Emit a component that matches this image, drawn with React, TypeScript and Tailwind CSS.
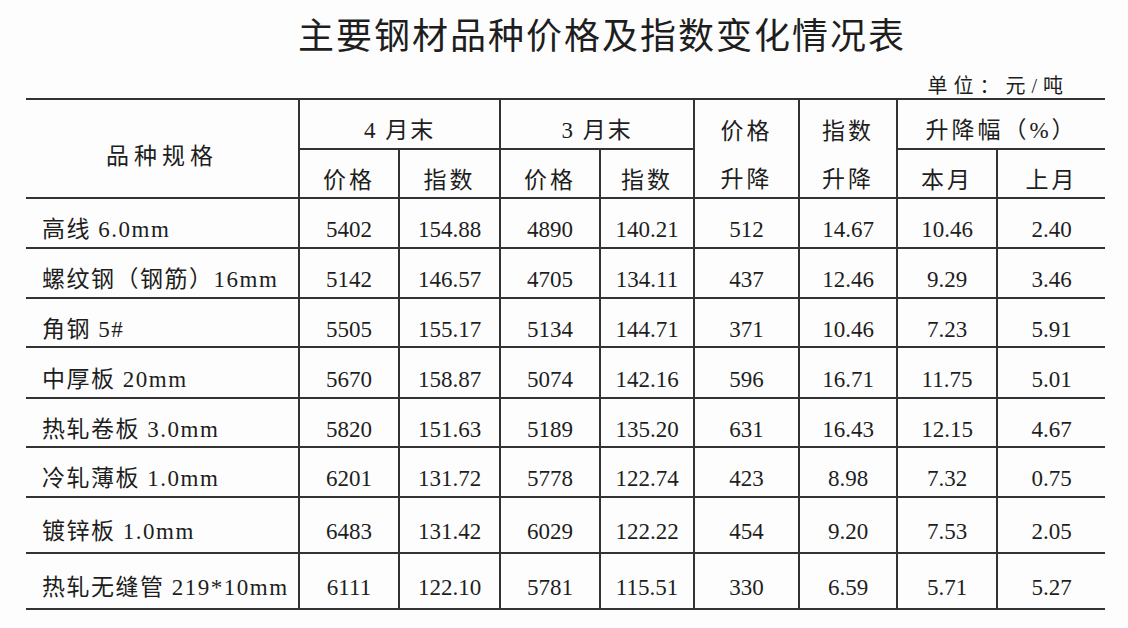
const rows = [
  { h: "h-[50px]", cells: ["高线 6.0mm", "5402", "154.88", "4890", "140.21", "512", "14.67", "10.46", "2.40"] },
  { h: "h-[50px]", cells: ["螺纹钢（钢筋）16mm", "5142", "146.57", "4705", "134.11", "437", "12.46", "9.29", "3.46"] },
  { h: "h-[49px]", cells: ["角钢 5#", "5505", "155.17", "5134", "144.71", "371", "10.46", "7.23", "5.91"] },
  { h: "h-[51px]", cells: ["中厚板 20mm", "5670", "158.87", "5074", "142.16", "596", "16.71", "11.75", "5.01"] },
  { h: "h-[49px]", cells: ["热轧卷板 3.0mm", "5820", "151.63", "5189", "135.20", "631", "16.43", "12.15", "4.67"] },
  { h: "h-[50px]", cells: ["冷轧薄板 1.0mm", "6201", "131.72", "5778", "122.74", "423", "8.98", "7.32", "0.75"] },
  { h: "h-[56px]", cells: ["镀锌板 1.0mm", "6483", "131.42", "6029", "122.22", "454", "9.20", "7.53", "2.05"] },
  { h: "h-[56px]", cells: ["热轧无缝管 219*10mm", "6111", "122.10", "5781", "115.51", "330", "6.59", "5.71", "5.27"] },
];

const line = "border-2 border-[#333] leading-[26px]";

export default function App() {
  return (
    <div className="h-[628px] w-[1128px] overflow-hidden bg-[#fdfdfd] font-['Liberation_Serif','Noto_Sans_CJK_SC',serif] text-[#1e1e1e]">
      <div className="flex h-[74px] items-center justify-center pl-[76px]">
        <h1 className="text-[36px] leading-none tracking-[2px]">主要钢材品种价格及指数变化情况表</h1>
      </div>
      <div className="flex h-[24px] items-center justify-end pr-[59px] text-[20px] leading-[24px] tracking-[6px]">
        单位：元/吨
      </div>
      <div className="ml-[26px] w-[1079px]">
        <table className="w-full table-fixed border-collapse">
          <colgroup>
            <col className="w-[273px]" />
            <col className="w-[100px]" />
            <col className="w-[101px]" />
            <col className="w-[100px]" />
            <col className="w-[94px]" />
            <col className="w-[105px]" />
            <col className="w-[98px]" />
            <col className="w-[100px]" />
            <col className="w-[108px]" />
          </colgroup>
          <thead className="text-[23px] font-normal">
            <tr className="h-[50px]">
              <th rowSpan={2} className={`${line} border-l-0 pt-[16px] align-middle font-normal tracking-[5px]`}>
                品种规格
              </th>
              <th colSpan={2} className={`${line} pt-[14px] align-middle font-normal tracking-[2px]`}>
                4 月末
              </th>
              <th colSpan={2} className={`${line} pt-[14px] align-middle font-normal tracking-[2px]`}>
                3 月末
              </th>
              <th className={`${line} border-b-0 pt-[14px] align-middle font-normal tracking-[3px]`}>价格</th>
              <th className={`${line} border-b-0 pt-[14px] align-middle font-normal tracking-[3px]`}>指数</th>
              <th colSpan={2} className={`${line} border-r-0 pt-[14px] align-middle font-normal tracking-[3px]`}>
                升降幅（%）
              </th>
            </tr>
            <tr className="h-[49px]">
              <th className={`${line} pt-[14px] align-middle font-normal tracking-[3px]`}>价格</th>
              <th className={`${line} pt-[14px] align-middle font-normal tracking-[3px]`}>指数</th>
              <th className={`${line} pt-[14px] align-middle font-normal tracking-[3px]`}>价格</th>
              <th className={`${line} pt-[14px] align-middle font-normal tracking-[3px]`}>指数</th>
              <th className={`${line} border-t-0 pt-[14px] align-middle font-normal tracking-[3px]`}>升降</th>
              <th className={`${line} border-t-0 pt-[14px] align-middle font-normal tracking-[3px]`}>升降</th>
              <th className={`${line} pt-[14px] align-middle font-normal tracking-[3px]`}>本月</th>
              <th className={`${line} border-r-0 pt-[14px] align-middle font-normal tracking-[3px]`}>上月</th>
            </tr>
          </thead>
          <tbody className="text-[23px]">
            {rows.map((row) => (
              <tr key={row.cells[0]} className={row.h}>
                {row.cells.map((cell, i) => (
                  <td
                    key={i}
                    className={
                      i === 0
                        ? `${line} border-l-0 pl-[16px] pt-[14px] text-left align-middle tracking-[1.5px] whitespace-nowrap`
                        : i === 8
                          ? `${line} border-r-0 pt-[14px] text-center align-middle`
                          : `${line} pt-[14px] text-center align-middle`
                    }
                  >
                    {cell}
                  </td>
                ))}
              </tr>
            ))}
          </tbody>
        </table>
      </div>
    </div>
  );
}
